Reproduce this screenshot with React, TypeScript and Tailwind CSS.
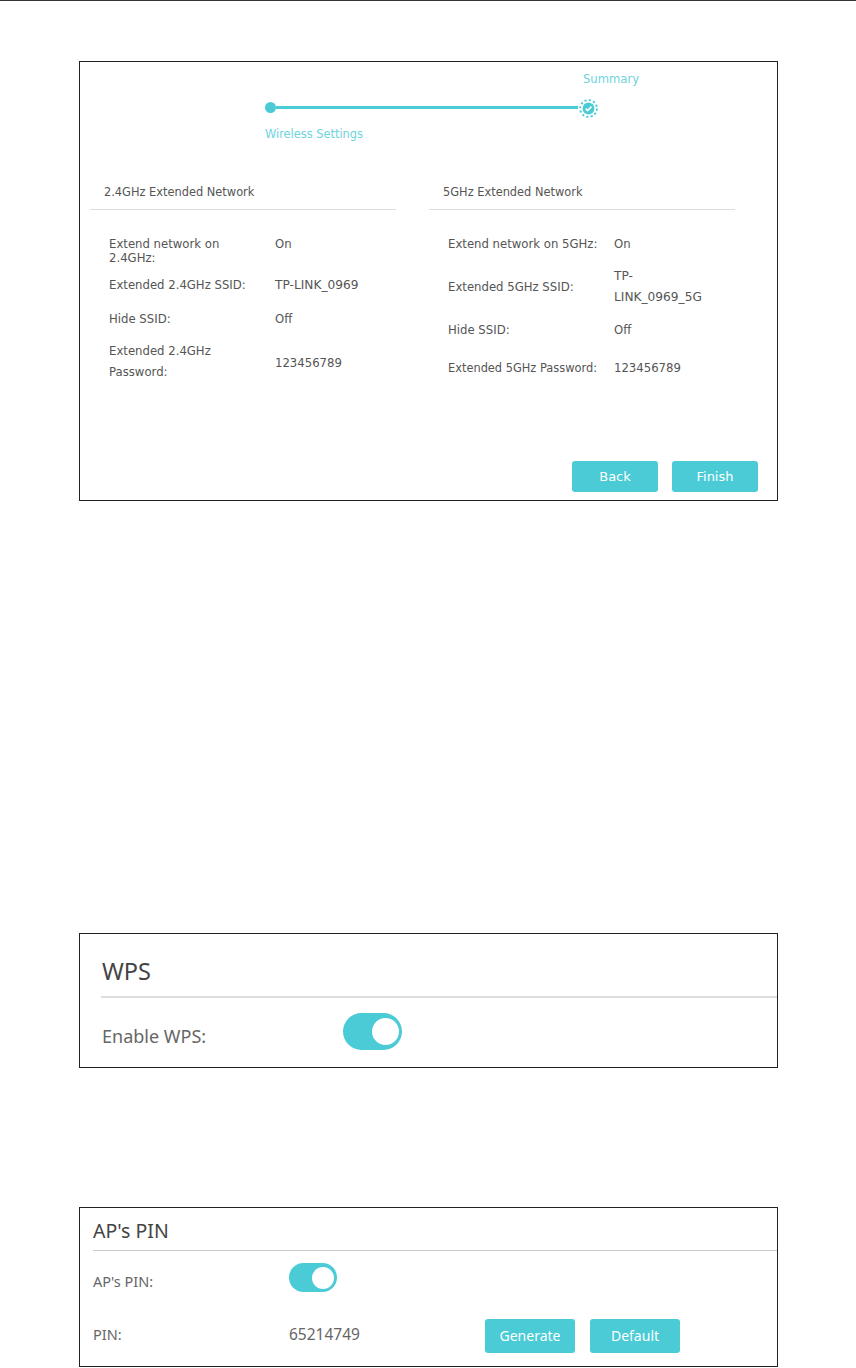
const ui = { fontFamily: '"DejaVu Sans", sans-serif' }

function Row({
  label,
  value,
  className,
  valueClass,
}: {
  label: React.ReactNode
  value: React.ReactNode
  className: string
  valueClass?: string
}) {
  return (
    <div className={`flex text-[11.7px] text-[#555] ${className}`}>
      <div className="w-[185px] shrink-0 pl-[19px] whitespace-nowrap">{label}</div>
      <div className={`w-[110px] ${valueClass ?? ''}`}>{value}</div>
    </div>
  )
}

function CheckRing() {
  return (
    <svg width="21" height="21" viewBox="0 0 21 21" className="mt-[2px] shrink-0">
      <circle cx="10.5" cy="10.5" r="8.4" fill="none" stroke="#4acbd6" strokeWidth="1.9" strokeDasharray="2.2 2.2" />
      <circle cx="10.5" cy="10.5" r="5.9" fill="#4acbd6" />
      <path d="M7.6 10.6l2 2 3.8-4" fill="none" stroke="#fff" strokeWidth="1.6" />
    </svg>
  )
}

function Toggle({ large }: { large?: boolean }) {
  return large ? (
    <div className="flex h-[37px] w-[59px] items-center justify-end rounded-full bg-[#4acbd6] pr-[3px]">
      <div className="h-[27px] w-[27px] rounded-full bg-white" />
    </div>
  ) : (
    <div className="flex h-[29px] w-[48px] items-center justify-end rounded-full bg-[#4acbd6] pr-[3px]">
      <div className="h-[22px] w-[22px] rounded-full bg-white" />
    </div>
  )
}

export default function App() {
  return (
    <div className="min-h-[1368px] w-[856px] bg-white" style={ui}>
      <div className="h-px bg-[#333]" />

      {/* Summary */}
      <div className="ml-[79px] mt-[60px] h-[440px] w-[699px] border border-[#222] text-[#555]">
        <div className="ml-[185px] w-[350px] pt-[9px] text-[11.6px] text-[#6ed4dd]">
          <div className="h-[16px] pl-[318px] leading-[16px] whitespace-nowrap">Summary</div>
          <div className="mt-[10px] flex h-[21px] items-center">
            <div className="h-[11px] w-[11px] shrink-0 rounded-full bg-[#4acbd6]" />
            <div className="-mt-[1px] h-[3px] w-[302px] shrink-0 bg-[#4acbd6]" />
            <CheckRing />
          </div>
          <div className="mt-[8px] h-[16px] text-[11.4px] leading-[16px] whitespace-nowrap">Wireless Settings</div>
        </div>

        <div className="mt-[32px] flex pl-[10px]">
          <div className="w-[306px]">
            <div className="h-[36px] border-b border-[#ddd] pl-[14px] pt-[10px] text-[11.4px] leading-[16px]">
              2.4GHz Extended Network
            </div>
            <Row
              className="mt-[27px] h-[28px] leading-[14px]"
              label={
                <>
                  Extend network on
                  <br />
                  2.4GHz:
                </>
              }
              value="On"
            />
            <Row
              className="mt-[10px] h-[20px] leading-[20px]"
              label="Extended 2.4GHz SSID:"
              value={<span className="text-[12.2px]">TP-LINK_0969</span>}
            />
            <Row className="mt-[14px] h-[20px] leading-[20px]" label="Hide SSID:" value="Off" />
            <Row
              className="mt-[12px] h-[42px] leading-[21px]"
              label={
                <>
                  Extended 2.4GHz
                  <br />
                  Password:
                </>
              }
              value="123456789"
              valueClass="mt-[12px]"
            />
          </div>

          <div className="ml-[33px] w-[306px]">
            <div className="h-[36px] border-b border-[#ddd] pl-[14px] pt-[10px] text-[11.4px] leading-[16px]">
              5GHz Extended Network
            </div>
            <Row className="mt-[24px] h-[20px] leading-[20px]" label="Extend network on 5GHz:" value="On" />
            <Row
              className="mt-[12px] h-[42px] items-center leading-[21px]"
              label="Extended 5GHz SSID:"
              value={
                <span className="text-[12.2px]">
                  TP-
                  <br />
                  LINK_0969_5G
                </span>
              }
            />
            <Row className="mt-[12px] h-[20px] leading-[20px]" label="Hide SSID:" value="Off" />
            <Row
              className="mt-[18px] h-[20px] leading-[20px]"
              label={<span className="text-[11.4px]">Extended 5GHz Password:</span>}
              value="123456789"
            />
          </div>
        </div>

        <div className="mt-[78px] flex justify-end gap-[14px] pr-[19px] text-[13px] text-white">
          <div className="flex h-[31px] w-[86px] items-center justify-center rounded-[3px] bg-[#4acbd6]">Back</div>
          <div className="flex h-[31px] w-[86px] items-center justify-center rounded-[3px] bg-[#4acbd6]">Finish</div>
        </div>
      </div>

      {/* WPS */}
      <div className="ml-[79px] mt-[432px] h-[135px] w-[699px] border border-[#222]" style={{ fontFamily: '"Noto Sans", sans-serif' }}>
        <div className="ml-[21px] box-content h-[43px] border-b-2 border-[#ddd] pl-px pt-[19px] text-[23.5px] leading-[36px] text-[#444]">
          WPS
        </div>
        <div className="ml-[21px] mt-[15px] flex h-[37px] items-center text-[18px] text-[#666]">
          <div className="w-[242px] pl-px pt-[10px]">Enable WPS:</div>
          <Toggle large />
        </div>
      </div>

      {/* AP PIN */}
      <div className="ml-[79px] mt-[139px] h-[160px] w-[699px] border border-[#222]" style={{ fontFamily: '"Noto Sans", sans-serif' }}>
        <div className="ml-[13px] h-[43px] border-b border-[#ccc] pt-[9px] text-[19.5px] leading-[28px] text-[#444]">AP's PIN</div>
        <div className="ml-[13px] mt-[12px] flex h-[29px] items-center text-[14.5px] text-[#666]">
          <div className="w-[196px] pt-2">AP's PIN:</div>
          <Toggle />
        </div>
        <div className="ml-[13px] mt-[27px] flex h-[34px] items-center text-[14.5px] text-[#666]">
          <div className="w-[196px] pb-[2px]">PIN:</div>
          <div className="w-[196px] pb-[2px] text-[15.5px]">65214749</div>
          <div className="flex h-[34px] w-[90px] items-center justify-center rounded-[3px] bg-[#4acbd6] pb-[2px] text-[14px] text-white">Generate</div>
          <div className="ml-[15px] flex h-[34px] w-[90px] items-center justify-center rounded-[3px] bg-[#4acbd6] pb-[2px] text-[14px] text-white">Default</div>
        </div>
      </div>
    </div>
  )
}
